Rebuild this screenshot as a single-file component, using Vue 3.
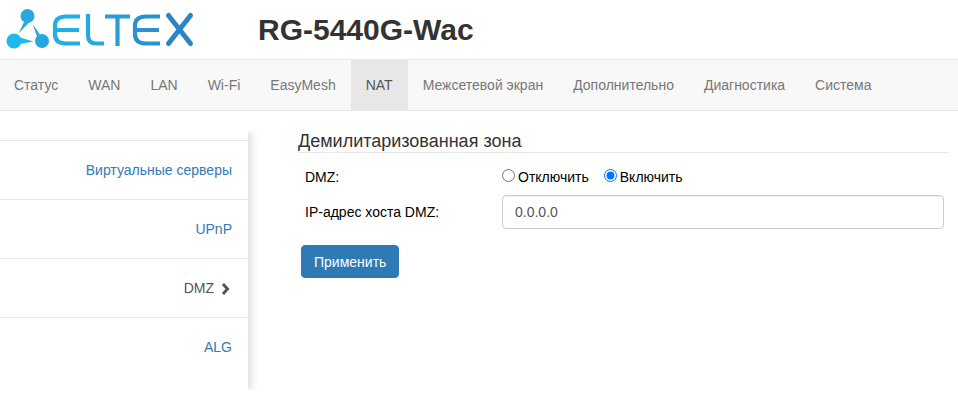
<template>
  <div class="page">
    <header class="top">
      <svg class="logo" width="196" height="59" viewBox="0 0 196 59" fill="none">
        <circle cx="27.5" cy="16" r="7" fill="#2aa9e0" />
        <circle cx="14" cy="41" r="7.5" fill="#1fb8ec" />
        <circle cx="42" cy="41" r="7" fill="#2aa6de" />
        <path d="M24 22 L29 22.5 L18.5 33.5 Z" fill="#2aa9e0" />
        <path d="M20 37.5 L20 44 L33.5 41.6 Z" fill="#1fb8ec" />
        <path d="M37 36.5 L40 34.5 L32.5 24 Z" fill="#2aa6de" />
        <g stroke-width="4.2">
          <path stroke="#25aee2" d="M80 16.5 H66 Q55 16.5 55 26 V34 Q55 43.5 66 43.5 H80 M56 30 H79" />
          <path stroke="#27a9e0" d="M88 14 V35 Q88 43.5 96 43.5 H104" />
          <path stroke="#2a9dd6" d="M105 16.5 H130 M117.5 16.5 V46" />
          <path stroke="#2a93cf" d="M160 16.5 H146 Q135 16.5 135 26 V34 Q135 43.5 146 43.5 H160 M136 30 H159" />
          <path stroke="#2a85c2" stroke-width="5" stroke-linecap="round" d="M168.5 15.5 L190.5 43.5 M190.5 15.5 L168.5 43.5" />
        </g>
      </svg>
      <h1 class="model">RG-5440G-Wac</h1>
    </header>

    <nav class="navbar">
      <a v-for="item in navItems" :key="item" class="nav-link" :class="{ active: item === 'NAT' }">{{ item }}</a>
    </nav>

    <div class="content">
      <aside class="sidebar">
        <div v-for="item in sideItems" :key="item.name" class="side-item" :class="{ current: item.current }">
          <span>{{ item.name }}</span>
          <svg v-if="item.current" class="chevron" width="9" height="12" viewBox="0 0 9 12">
            <path d="M2 1 L6.5 6 L2 11" fill="none" stroke="#555" stroke-width="3" />
          </svg>
        </div>
      </aside>

      <main class="main">
        <h2 class="title">Демилитаризованная зона</h2>
        <div class="form-row">
          <label class="row-label">DMZ:</label>
          <div class="radios">
            <label class="radio"><input type="radio" name="dmz" value="off" v-model="dmz" />Отключить</label>
            <label class="radio"><input type="radio" name="dmz" value="on" v-model="dmz" />Включить</label>
          </div>
        </div>
        <div class="form-row host-row">
          <label class="row-label">IP-адрес хоста DMZ:</label>
          <input class="text-input" type="text" v-model="host" />
        </div>
        <button class="apply">Применить</button>
      </main>
    </div>
  </div>
</template>

<script setup>
import { ref } from 'vue'

const navItems = ['Статус', 'WAN', 'LAN', 'Wi-Fi', 'EasyMesh', 'NAT', 'Межсетевой экран', 'Дополнительно', 'Диагностика', 'Система']

const sideItems = [
  { name: 'Виртуальные серверы' },
  { name: 'UPnP' },
  { name: 'DMZ', current: true },
  { name: 'ALG' },
]

const dmz = ref('on')
const host = ref('0.0.0.0')
</script>

<style>
html, body {
  margin: 0;
  background: #fff;
}
</style>

<style scoped>
.page {
  width: 958px;
  height: 404px;
  overflow: hidden;
  font-family: "Liberation Sans", Arial, sans-serif;
  font-size: 14px;
  color: #333;
}

.top {
  height: 59px;
  display: flex;
  align-items: center;
  border-bottom: 1px solid #e7e7e7;
}

.logo {
  flex: none;
}

.model {
  margin: 0 0 0 62px;
  font-size: 30px;
  font-weight: bold;
  line-height: 60px;
  color: #333;
}

.navbar {
  height: 50px;
  display: flex;
  background: #f8f8f8;
  border-bottom: 1px solid #e7e7e7;
}

.nav-link {
  padding: 0 15px;
  line-height: 50px;
  color: #777;
}

.nav-link:first-child {
  padding-left: 14px;
}

.nav-link.active {
  background: #e7e7e7;
  color: #555;
}

.content {
  display: flex;
}

.sidebar {
  flex: none;
  width: 248px;
  height: 259px;
  margin-top: 20px;
  padding-top: 9px;
  box-sizing: border-box;
  background: #fff;
  box-shadow: 5px 0 7px -1px rgba(0, 0, 0, 0.13);
  clip-path: inset(0 -14px 0 0);
}

.side-item {
  height: 59px;
  box-sizing: border-box;
  padding-right: 16px;
  display: flex;
  align-items: center;
  justify-content: flex-end;
  border-top: 1px solid #e7e7e7;
  color: #337ab7;
}

.side-item.current {
  color: #555;
  padding-right: 18px;
}

.chevron {
  margin-left: 7px;
  margin-top: 2px;
}

.main {
  flex: 1;
  padding: 20px 10px 0 50px;
}

.title {
  margin: 0;
  font-size: 18px;
  font-weight: normal;
  line-height: 21px;
  border-bottom: 1px solid #e7e7e7;
  color: #333;
}

.form-row {
  display: flex;
  align-items: center;
  padding-left: 7px;
  padding-right: 4px;
  margin-top: 16px;
  color: #000;
}

.host-row {
  margin-top: 10px;
}

.row-label {
  flex: none;
  width: 197px;
}

.radios {
  display: flex;
  gap: 15px;
}

.radio {
  display: flex;
  align-items: center;
}

.radio input {
  width: 13px;
  height: 13px;
  margin: -2px 3px 2px 0;
}

.text-input {
  flex: 1;
  height: 34px;
  box-sizing: border-box;
  padding: 6px 12px;
  border: 1px solid #ccc;
  border-radius: 4px;
  font: inherit;
  color: #555;
  box-shadow: inset 0 1px 1px rgba(0, 0, 0, 0.075);
}

.apply {
  display: block;
  height: 33px;
  margin: 16px 0 0 3px;
  padding: 0 12px;
  border: 1px solid #2d7ab5;
  border-radius: 4px;
  background: #2d7ab5;
  font: inherit;
  color: #fff;
}
</style>
